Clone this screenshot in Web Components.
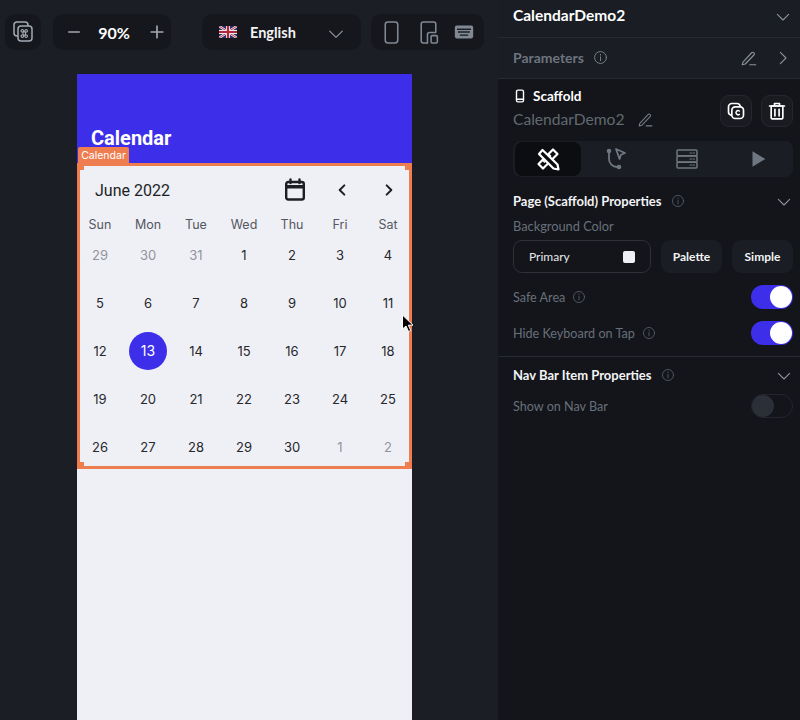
<!DOCTYPE html>
<html>
<head>
<meta charset="utf-8">
<title>Calendar</title>
<style>
  html, body { margin: 0; height: 100%; background: #1b1e25; overflow: hidden; }
</style>
</head>
<body>
<builder-app>
  <builder-canvas slot="canvas"></builder-canvas>
  <builder-panel slot="panel"></builder-panel>
</builder-app>

<script>
'use strict';

(function() {
  const ICONS = {
    shortcut: '<rect x="3" y="2" width="14" height="14" rx="3"/><rect x="7" y="6" width="14" height="15" rx="3" fill="#16181d"/><path d="M12 12h2.500v3H12zM12 12a1.300 1.300 0 1 0-1.300 0zM14.500 12a1.300 1.300 0 1 1 1.300 0zM12 15a1.300 1.300 0 1 1-1.300 0zM14.500 15a1.300 1.300 0 1 0 1.300 0z" stroke-width="1.100"/>',
    minus: '<path d="M5 12h14" stroke-width="2"/>',
    plus: '<path d="M5 12h14M12 5v14" stroke-width="2"/>',
    chevronDown: '<path d="M4.500 8.500l7.500 7.500 7.500-7.500"/>',
    chevronRight: '<path d="M8.500 4.500l7.500 7.500-7.500 7.500"/>',
    phone: '<rect x="6" y="2" width="12" height="20" rx="2.500"/>',
    tablet: '<path d="M11 22H7a2 2 0 0 1-2-2V4a2 2 0 0 1 2-2h10a2 2 0 0 1 2 2v7"/><path d="M11 22v-8a2 2 0 0 1 2-2h6"/><rect x="14.500" y="15" width="6" height="7" rx="1"/>',
    keyboard: '<rect x="2" y="5" width="20" height="14" rx="2" fill="currentColor" stroke="none"/><path d="M5 9h14M6 12h12" stroke="#15171c" stroke-width="1.400" stroke-dasharray="1.400 1.200"/><path d="M8 15.500h8" stroke="#15171c" stroke-width="1.400"/>',
    pencil: '<path d="M4 17.500L15.500 5a2 2 0 0 1 3 0 2 2 0 0 1 0 3L7 20l-4 1z"/><path d="M13 21h8"/>',
    info: '<circle cx="12" cy="12" r="9.500"/><path d="M12 11v6M12 7v1.200"/>',
    device: '<rect x="6" y="2" width="12" height="20" rx="2.500" stroke-width="2.400"/><path d="M6 17.500h12" stroke-width="2.400"/>',
    copy: '<path d="M6 17a4 4 0 0 1-3-4V7a4 4 0 0 1 4-4h6a4 4 0 0 1 4 3" stroke-width="2"/><rect x="7" y="7" width="14" height="14" rx="4" stroke-width="2"/><path d="M16 12a2.500 2.500 0 1 0 0 4" stroke-width="1.800"/>',
    trash: '<path d="M3 6h18M9 6V3h6v3" stroke-width="2"/><path d="M5 6h14v14a1.500 1.500 0 0 1-1.500 1.500h-11A1.500 1.500 0 0 1 5 20z" stroke-width="2"/><path d="M9.500 10v8M14.500 10v8" stroke-width="2"/>',
    tools: '<path d="M2.500 17L17 2.500l4.500 4.500L7 21.500z" stroke-width="2.200"/><path d="M6.500 13l2 2M9.500 10l2 2M12.500 7l2 2" stroke-width="1.700"/><path d="M6.500 3l15 14.500 1 5-5-1L3 7z" fill="#0c0d10" stroke-width="2.200"/>',
    flow: '<circle cx="5" cy="4" r="2.300" fill="currentColor" stroke="none"/><circle cx="15" cy="20" r="2.300" fill="currentColor" stroke="none"/><path d="M5 5v7a8 8 0 0 0 8 8" stroke-width="1.800"/><path d="M12 2l9 4-4 1.800L15.500 12z" stroke-width="1.800"/>',
    server: '<rect x="2" y="3" width="20" height="5.800" rx="1"/><rect x="2" y="9" width="20" height="6" rx="1"/><rect x="2" y="15.200" width="20" height="5.800" rx="1"/><path d="M15 6h1.500M18 6h1.500M15 12h1.500M18 12h1.500M15 18h1.500M18 18h1.500" stroke-width="1.200"/>',
    play: '<path d="M6 3.500l14 8.500-14 8.500z" fill="currentColor" stroke="none"/>',
    calendar: '<rect x="3.200" y="4" width="17.600" height="17.500" rx="2" stroke-width="2.400"/><path d="M3 7.500h18v2.500H3z" fill="currentColor" stroke-width="1"/><path d="M7.500 1.500V5M16.500 1.500V5" stroke-width="2.400"/>',
    back: '<path d="M15.500 5l-7 7 7 7" stroke-width="3"/>',
    forward: '<path d="M8.500 5l7 7-7 7" stroke-width="3"/>'
  };

  class XIcon extends HTMLElement {
    connectedCallback() {
      const size = this.getAttribute('size') || 18;
      const body = ICONS[this.getAttribute('name')] || '';
      this.attachShadow({ mode: 'open' }).innerHTML = `
        <style>
          :host { display: inline-flex; flex: none; }
          svg { display: block; }
        </style>
        <svg width="${size}" height="${size}" viewBox="0 0 24 24" fill="none"
          stroke="currentColor" stroke-width="1.500" stroke-linecap="round" stroke-linejoin="round">${body}</svg>
      `;
    }
  }

  class BuilderApp extends HTMLElement {
    constructor() {
      super();
      this.attachShadow({ mode: 'open' }).innerHTML = `
        <style>
          :host { display: flex; width: 800px; height: 720px; overflow: hidden; }
          ::slotted([slot="canvas"]) { width: 498px; }
          ::slotted([slot="panel"]) { width: 302px; }
        </style>
        <slot name="canvas"></slot>
        <slot name="panel"></slot>
      `;
    }
  }

  class BuilderCanvas extends HTMLElement {
    constructor() {
      super();
      this.attachShadow({ mode: 'open' }).innerHTML = `
        <style>
          :host {
            display: flex;
            flex-direction: column;
            background: #1b1e25;
            font-family: "Lato", "Liberation Sans", sans-serif;
          }
          .toolbar {
            display: flex;
            height: 36px;
            padding: 14px 0 24px 5px;
          }
          .pill {
            display: flex;
            align-items: center;
            height: 36px;
            background: #15171c;
            border-radius: 10px;
            color: #8a929c;
            box-sizing: border-box;
          }
          .shortcut { width: 36px; justify-content: center; color: #a3a9b1; margin-right: 12px; }
          .zoom { width: 118px; justify-content: space-between; padding: 0 4px 0 12px; color: #a3a9b1; margin-right: 31px; }
          .zoom b { font-size: 16px; font-weight: 700; color: #fff; margin-right: 2px; }
          .lang { width: 159px; padding: 0 15px 0 17px; margin-right: 10px; }
          .lang span { margin-left: 13px; font-size: 14.500px; font-weight: 700; color: #f2f3f5; flex: 1; }
          .lang x-icon { margin-top: 4px; }
          .devices { width: 113px; padding: 0 9px 0 8px; justify-content: space-between; color: #7f8993; }
        </style>
        <div class="toolbar">
          <div class="pill shortcut"><x-icon name="shortcut" size="24"></x-icon></div>
          <div class="pill zoom">
            <x-icon name="minus" size="18"></x-icon><b>90%</b><x-icon name="plus" size="20"></x-icon>
          </div>
          <div class="pill lang">
            <svg width="18" height="12" viewBox="0 0 18 12">
              <rect width="18" height="12" fill="#2a2f6b"/>
              <path d="M0 0l18 12M18 0L0 12" stroke="#e9e4ea" stroke-width="2.400"/>
              <path d="M0 0l18 12M18 0L0 12" stroke="#b3263c" stroke-width="0.900"/>
              <path d="M9 0v12M0 6h18" stroke="#e9e4ea" stroke-width="4"/>
              <path d="M9 0v12M0 6h18" stroke="#b3263c" stroke-width="2.200"/>
            </svg>
            <span>English</span>
            <x-icon name="chevronDown" size="20"></x-icon>
          </div>
          <div class="pill devices">
            <x-icon name="phone" size="25"></x-icon>
            <x-icon name="tablet" size="25"></x-icon>
            <x-icon name="keyboard" size="22"></x-icon>
          </div>
        </div>
        <phone-preview></phone-preview>
      `;
    }
  }

  class PhonePreview extends HTMLElement {
    constructor() {
      super();
      this.attachShadow({ mode: 'open' }).innerHTML = `
        <style>
          :host {
            display: flex;
            flex-direction: column;
            flex: 1;
            width: 335px;
            margin-left: 77px;
            background: #eff0f6;
            position: relative;
          }
          .appbar {
            height: 89px;
            background: #3d2eea;
            box-sizing: border-box;
            padding: 55px 14px 0;
            color: #fff;
            font: 700 20px/18px "Roboto", "Liberation Sans", sans-serif;
          }
          .tag {
            position: absolute;
            left: 1px;
            top: 73px;
            width: 51px;
            height: 16px;
            background: #ee7d4f;
            color: #fff;
            font: 400 10.500px/18px "Inter", "Liberation Sans", sans-serif;
            text-align: center;
            border-radius: 2px 2px 0 0;
          }
          .cursor { position: absolute; left: 324px; top: 240px; }
        </style>
        <div class="appbar">Calendar</div>
        <div class="tag">Calendar</div>
        <month-calendar></month-calendar>
        <svg class="cursor" width="14" height="19" viewBox="0 0 14 19">
          <path d="M1.500 1v14l3.500-3 2.500 5.500 2.300-1-2.500-5.300H12z" fill="#000" stroke="#fff" stroke-width="1"/>
        </svg>
      `;
    }
  }

  class MonthCalendar extends HTMLElement {
    constructor() {
      super();
      const weekdays = ['Sun', 'Mon', 'Tue', 'Wed', 'Thu', 'Fri', 'Sat'];
      const days = [
        [29, 1], [30, 1], [31, 1], [1], [2], [3], [4],
        [5], [6], [7], [8], [9], [10], [11],
        [12], [13, 0, 1], [14], [15], [16], [17], [18],
        [19], [20], [21], [22], [23], [24], [25],
        [26], [27], [28], [29], [30], [1, 1], [2, 1]
      ];
      const dayCells = days.map(([n, muted, selected]) => {
        const cls = muted ? 'muted' : selected ? 'selected' : '';
        return `<div class="day ${cls}"><span>${n}</span></div>`;
      }).join('');

      this.attachShadow({ mode: 'open' }).innerHTML = `
        <style>
          :host {
            display: block;
            height: 306px;
            box-sizing: border-box;
            border: 3px solid #ee7d4f;
            position: relative;
            font-family: "Inter", "Liberation Sans", sans-serif;
            color: #1d1f24;
          }
          .handle { position: absolute; width: 5px; height: 5px; background: #ee7d4f; }
          .head {
            display: flex;
            align-items: center;
            height: 24px;
            padding: 12px 0 0 15px;
            font: 400 16px "Roboto", "Liberation Sans", sans-serif;
          }
          .head span { flex: 1; }
          .head x-icon:nth-of-type(1) { margin-right: 27px; }
          .head x-icon:nth-of-type(2) { margin-right: 31px; }
          .head x-icon:nth-of-type(3) { margin-right: 12px; }
          .week, .days {
            display: grid;
            grid-template-columns: repeat(7, 40px);
            column-gap: 8px;
          }
          .week {
            margin-top: 13px;
            height: 20px;
            line-height: 20px;
            font-size: 12.500px;
            text-align: center;
            color: #54575e;
          }
          .days { margin-top: 1px; row-gap: 10px; font-size: 13px; }
          .day { height: 38px; display: flex; align-items: center; justify-content: center; color: #26282d; }
          .day.muted { color: #92949a; }
          .day span { width: 38px; height: 38px; line-height: 38px; text-align: center; border-radius: 50%; }
          .day.selected span { background: #3d2eea; color: #fff; font-size: 14px; }
        </style>
        <i class="handle" style="left:-1px;top:-1px"></i>
        <i class="handle" style="right:-1px;top:-1px"></i>
        <i class="handle" style="left:-1px;bottom:-1px"></i>
        <i class="handle" style="right:-1px;bottom:-1px"></i>
        <div class="head">
          <span>June 2022</span>
          <x-icon name="calendar" size="24"></x-icon>
          <x-icon name="back" size="16"></x-icon>
          <x-icon name="forward" size="16"></x-icon>
        </div>
        <div class="week">${weekdays.map(d => `<div>${d}</div>`).join('')}</div>
        <div class="days">${dayCells}</div>
      `;
    }
  }

  class XToggle extends HTMLElement {
    constructor() {
      super();
      this.attachShadow({ mode: 'open' }).innerHTML = `
        <style>
          :host {
            display: block;
            flex: none;
            box-sizing: border-box;
            width: 42px;
            height: 24px;
            padding: 1px;
            border-radius: 12px;
            background: #3d2eea;
          }
          :host([off]) { background: transparent; border: 1px solid #23262d; padding: 0; }
          i { display: block; width: 22px; height: 22px; border-radius: 50%; background: #fff; margin-left: 18px; }
          :host([off]) i { background: #2b2f38; margin-left: 0; }
        </style>
        <i></i>
      `;
    }
  }

  class PropRow extends HTMLElement {
    constructor() {
      super();
      const info = this.hasAttribute('noinfo') ? '' : '<x-icon name="info" size="14"></x-icon>';
      this.attachShadow({ mode: 'open' }).innerHTML = `
        <style>
          :host {
            display: flex;
            align-items: center;
            height: 24px;
            color: #68707a;
            font-size: 12.600px;
          }
          .label { display: flex; align-items: center; gap: 7px; flex: 1; }
          x-icon { color: #565c65; }
        </style>
        <div class="label"><slot></slot>${info}</div>
        <slot name="control"></slot>
      `;
    }
  }

  class SectionHead extends HTMLElement {
    constructor() {
      super();
      this.attachShadow({ mode: 'open' }).innerHTML = `
        <style>
          :host {
            display: flex;
            align-items: center;
            height: 20px;
            color: #f2f3f5;
            font-size: 13px;
            font-weight: 700;
          }
          .label { display: flex; align-items: center; gap: 9px; flex: 1; }
          .i { color: #565c65; }
          .c { color: #8a929c; margin-top: 2px; }
        </style>
        <div class="label"><slot></slot><x-icon class="i" name="info" size="14"></x-icon></div>
        <x-icon class="c" name="chevronDown" size="18"></x-icon>
      `;
    }
  }

  class BuilderPanel extends HTMLElement {
    constructor() {
      super();
      this.attachShadow({ mode: 'open' }).innerHTML = `
        <style>
          :host {
            display: block;
            background: #13151a;
            font-family: "Lato", "Liberation Sans", sans-serif;
            color: #fff;
          }
          .bar {
            display: flex;
            align-items: center;
            box-sizing: border-box;
            padding: 0 8px 0 15px;
            background: #1a1d23;
            border-bottom: 1px solid #262a31;
          }
          .title { height: 38px; padding-bottom: 7px; font-size: 15.500px; font-weight: 700; justify-content: space-between; }
          .title x-icon { color: #8a929c; margin-top: 3px; }
          .params { height: 41px; padding-bottom: 1px; color: #6d747f; font-size: 14px; font-weight: 700; }
          .params .i { margin-left: 9px; color: #7c838d; }
          .params .fill { flex: 1; }
          .params .p { margin-right: 16px; color: #8a929c; }
          .params .c { color: #8a929c; }
          .scaffold { display: flex; padding: 8px 7px 0 15px; height: 54px; }
          .names { flex: 1; }
          .kind { display: flex; align-items: center; gap: 6px; height: 18px; font-size: 13.500px; font-weight: 700; }
          .name { display: flex; align-items: center; gap: 12px; margin-top: 5px; color: #62696f; font-size: 15.600px; }
          .name x-icon { color: #767d87; }
          .actions { display: flex; gap: 9px; padding-top: 8px; }
          .square {
            display: flex;
            align-items: center;
            justify-content: center;
            box-sizing: border-box;
            width: 32px;
            height: 32px;
            border: 1px solid #24272d;
            border-radius: 9px;
            background: #191b20;
          }
          .tabs {
            display: flex;
            height: 36px;
            margin: 0 7px 0 15px;
            padding: 1px 0 1px 2px;
            box-sizing: border-box;
            border-radius: 8px;
            background: #1a1d23;
            color: #6e7781;
          }
          .tabs div { flex: 1; display: flex; align-items: center; justify-content: center; border-radius: 8px; }
          .tabs .on { flex: none; width: 66px; background: #0c0d10; color: #fff; }
          .props { padding: 14px 7px 0 15px; }
          .sub { color: #68707a; font-size: 12.800px; margin-top: 6px; height: 18px; line-height: 18px; }
          .color { display: flex; gap: 10px; margin: 5px 0 12px; }
          .field, .btn { height: 33px; box-sizing: border-box; border-radius: 9px; font-size: 12px; display: flex; align-items: center; }
          .field {
            width: 138px;
            padding: 0 15px;
            justify-content: space-between;
            border: 1px solid #2d3138;
            color: #e8e9ec;
          }
          .swatch { width: 12px; height: 12px; border-radius: 2px; background: #eff0f6; }
          .btn { flex: 1; justify-content: center; background: #1a1d23; font-weight: 700; color: #f2f3f5; }
          prop-row { margin-bottom: 12px; }
          prop-row.last { margin-bottom: 11px; }
          .rule { border-top: 1px solid #262a31; }
          .nav { padding: 8px 7px 0 15px; }
          .nav prop-row { margin-top: 9px; }
        </style>
        <div class="bar title"><span>CalendarDemo2</span><x-icon name="chevronDown" size="18"></x-icon></div>
        <div class="bar params">
          <span>Parameters</span>
          <x-icon class="i" name="info" size="15"></x-icon>
          <span class="fill"></span>
          <x-icon class="p" name="pencil" size="18"></x-icon>
          <x-icon class="c" name="chevronRight" size="18"></x-icon>
        </div>
        <div class="scaffold">
          <div class="names">
            <div class="kind"><x-icon name="device" size="14"></x-icon>Scaffold</div>
            <div class="name">CalendarDemo2<x-icon name="pencil" size="17"></x-icon></div>
          </div>
          <div class="actions">
            <div class="square"><x-icon name="copy" size="20"></x-icon></div>
            <div class="square"><x-icon name="trash" size="20"></x-icon></div>
          </div>
        </div>
        <div class="tabs">
          <div class="on"><x-icon name="tools" size="24"></x-icon></div>
          <div><x-icon name="flow" size="24"></x-icon></div>
          <div><x-icon name="server" size="24"></x-icon></div>
          <div><x-icon name="play" size="22"></x-icon></div>
        </div>
        <div class="props">
          <section-head>Page (Scaffold) Properties</section-head>
          <div class="sub">Background Color</div>
          <div class="color">
            <div class="field"><span>Primary</span><i class="swatch"></i></div>
            <div class="btn">Palette</div>
            <div class="btn">Simple</div>
          </div>
          <prop-row>Safe Area<x-toggle slot="control"></x-toggle></prop-row>
          <prop-row class="last">Hide Keyboard on Tap<x-toggle slot="control"></x-toggle></prop-row>
        </div>
        <div class="rule"></div>
        <div class="nav">
          <section-head>Nav Bar Item Properties</section-head>
          <prop-row noinfo>Show on Nav Bar<x-toggle slot="control" off></x-toggle></prop-row>
        </div>
      `;
    }
  }

  customElements.define('x-icon', XIcon);
  customElements.define('x-toggle', XToggle);
  customElements.define('prop-row', PropRow);
  customElements.define('section-head', SectionHead);
  customElements.define('month-calendar', MonthCalendar);
  customElements.define('phone-preview', PhonePreview);
  customElements.define('builder-canvas', BuilderCanvas);
  customElements.define('builder-panel', BuilderPanel);
  customElements.define('builder-app', BuilderApp);
})();
</script>
</body>
</html>
